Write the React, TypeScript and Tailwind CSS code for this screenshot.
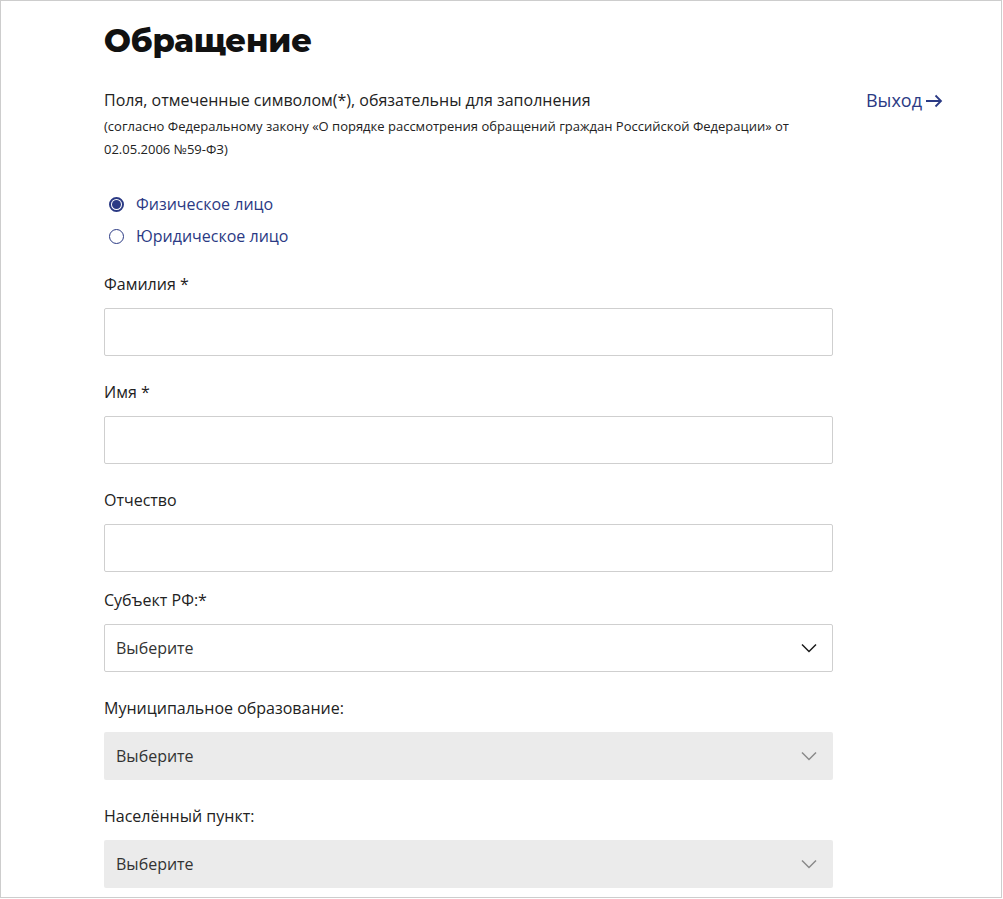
import React from "react";

const Chevron = ({ muted }: { muted?: boolean }) => (
  <svg width="16" height="10" viewBox="0 0 16 10" fill="none" className="shrink-0">
    <path d="M1 1.5 L8 8.5 L15 1.5" stroke={muted ? "#8a8a8a" : "#1a1a1a"} strokeWidth="1.5" />
  </svg>
);

const Label = ({ children }: { children: React.ReactNode }) => (
  <div className="text-[16px] leading-[24px] text-[#222] mb-3">{children}</div>
);

const TextInput = () => (
  <input
    type="text"
    className="block w-[729px] h-[48px] border border-[#cfcfcf] rounded-[2px] bg-white px-3 outline-none"
  />
);

const Select = ({ disabled }: { disabled?: boolean }) => (
  <div
    className={
      disabled
        ? "w-[729px] h-[48px] rounded-[2px] bg-[#ebebeb] flex items-center justify-between pl-3 pr-4"
        : "w-[729px] h-[48px] rounded-[2px] border border-[#cfcfcf] bg-white flex items-center justify-between pl-[11px] pr-[15px]"
    }
  >
    <span className="text-[16px] text-[#333]">Выберите</span>
    <Chevron muted={disabled} />
  </div>
);

export default function App() {
  return (
    <div className="w-[1002px] h-[898px] border border-[#cdcdcd] bg-white overflow-hidden font-['Open_Sans',sans-serif]">
      <div className="pl-[103px] pr-[58px] pt-[16px]">
        <h1 className="font-['Montserrat','Open_Sans',sans-serif] font-extrabold text-[32px] leading-[48px] text-[#111] tracking-[-0.1px]">
          Обращение
        </h1>
        <div className="flex justify-between mt-[23px]">
          <div>
            <div className="text-[16px] leading-[24px] text-[#222]">
              Поля, отмеченные символом(*), обязательны для заполнения
            </div>
            <div className="text-[13px] leading-[23px] text-[#222] w-[690px] mt-[3px]">
              (согласно Федеральному закону «О порядке рассмотрения обращений граждан Российской Федерации» от 02.05.2006 №59-ФЗ)
            </div>
          </div>
          <a className="text-[18px] leading-[24px] text-[#2b3a84] flex items-center h-[24px]">
            Выход
            <svg width="18" height="14" viewBox="0 0 18 14" fill="none" className="ml-[3px] mt-[1px]">
              <path d="M1 7 H16 M10.5 1.5 L16 7 L10.5 12.5" stroke="#2b3a84" strokeWidth="1.8" />
            </svg>
          </a>
        </div>

        <div className="mt-[31px] flex flex-col gap-[8px]">
          <div className="flex items-center h-[24px]">
            <span className="ml-[5px] w-[15px] h-[15px] rounded-full border-[2px] border-[#2b3a84] flex items-center justify-center">
              <span className="w-[9px] h-[9px] rounded-full bg-[#2b3a84]" />
            </span>
            <span className="ml-[12px] text-[16px] text-[#2b3a84]">Физическое лицо</span>
          </div>
          <div className="flex items-center h-[24px]">
            <span className="ml-[5px] w-[15px] h-[15px] rounded-full border border-[#2b3a84]" />
            <span className="ml-[12px] text-[16px] text-[#2b3a84]">Юридическое лицо</span>
          </div>
        </div>

        <div className="mt-[24px] flex flex-col">
          <div>
            <Label>Фамилия *</Label>
            <TextInput />
          </div>
          <div className="mt-[24px]">
            <Label>Имя *</Label>
            <TextInput />
          </div>
          <div className="mt-[24px]">
            <Label>Отчество</Label>
            <TextInput />
          </div>
          <div className="mt-[16px]">
            <Label>Субъект РФ:*</Label>
            <Select />
          </div>
          <div className="mt-[24px]">
            <Label>Муниципальное образование:</Label>
            <Select disabled />
          </div>
          <div className="mt-[24px]">
            <Label>Населённый пункт:</Label>
            <Select disabled />
          </div>
        </div>
      </div>
    </div>
  );
}
